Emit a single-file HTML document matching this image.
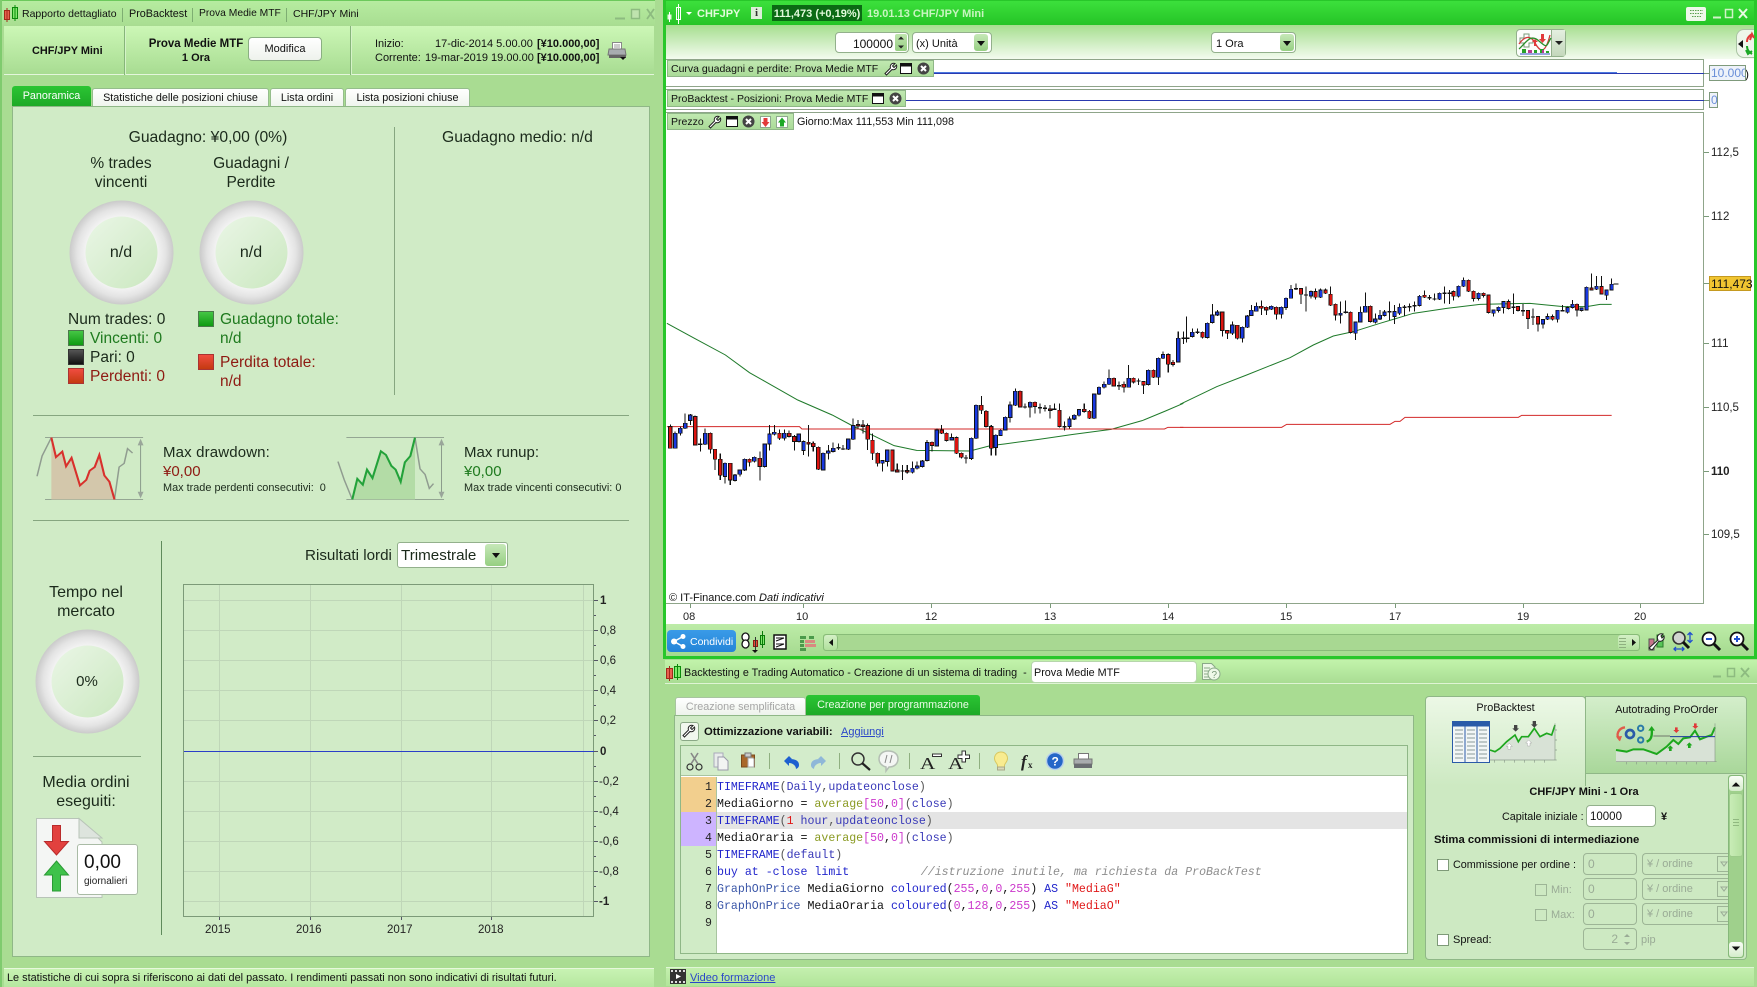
<!DOCTYPE html>
<html lang="it"><head><meta charset="utf-8"><title>ProBacktest</title>
<style>
html,body{margin:0;padding:0}
body{width:1757px;height:987px;overflow:hidden;position:relative;background:#a9dc92;font-family:"Liberation Sans",sans-serif;font-size:11px;color:#111}
.a{position:absolute;box-sizing:border-box}
.t{position:absolute;white-space:nowrap;line-height:16px;height:16px;margin-top:1px}
.c{text-align:center}
.b{font-weight:bold}
.f15{font-size:15.5px;color:#1b2a1b}
.sq{position:absolute;width:16px;height:16px;box-sizing:border-box;border:1px solid #4a7a4a}
.grn{background:linear-gradient(#45c645,#0f9a12)}
.blk{background:linear-gradient(#555,#111);border-color:#333}
.red{background:linear-gradient(#f04c40,#c43a10);border-color:#a33}
.tab{position:absolute;top:88px;height:19px;background:linear-gradient(#fff,#eef4ec);border:1px solid #95bd8c;border-bottom:0;border-radius:3px 3px 0 0;text-align:center;line-height:19px;font-size:10.8px;box-sizing:border-box}
.inp{position:absolute;box-sizing:border-box;background:#fff;border:1px solid #93b08c;border-radius:4px}
.dis{position:absolute;box-sizing:border-box;border:1px solid #9db596;border-radius:4px;height:22px;color:#9aab96;line-height:21px;padding-left:4px;font-size:12px}
.arrbtn{position:absolute;box-sizing:border-box;background:linear-gradient(#c6e8b8,#96cf82);border-radius:3px}
.arrbtn:after{content:"";position:absolute;left:50%;top:50%;margin:-2px 0 0 -4px;border:4px solid transparent;border-top:5px solid #111;border-bottom:0}
.tag{position:absolute;left:667px;background:linear-gradient(#c0e8b0,#aadb98);border:1px solid #8fb787;box-sizing:border-box;height:17px;line-height:16px;padding-left:3px;font-size:10.5px;white-space:nowrap}
.pane{position:absolute;left:666px;width:1038px;background:#fff;border:1px solid #8fa58a;border-left:0;box-sizing:border-box}
.code{position:absolute;left:717px;white-space:pre;font-family:"Liberation Mono",monospace;font-size:11.6px;line-height:17px;height:17px;color:#111;margin-top:2px}
.n{position:absolute;left:680px;width:32px;text-align:right;font-family:"Liberation Mono",monospace;font-size:11.6px;line-height:17px;height:17px;color:#222;margin-top:2px}
.k{color:#2226cc}.v{color:#3838b8}.o{color:#8a9a22}.m{color:#cc38cc}.p{color:#555}.s{color:#e01818}.h{color:#3a56a8}.cm{color:#8d8d8d;font-style:italic;margin-left:2px}
svg{position:absolute;overflow:visible}
.ax{font-size:12px;color:#111}
.yl{position:absolute;left:600px;font-size:11.5px;line-height:14px;height:14px;color:#222;white-space:nowrap;margin-top:1px}
.lb{position:absolute;font-size:11.5px;color:#222;white-space:nowrap;line-height:14px;margin-top:1px}
</style></head><body>

<!-- LEFT WINDOW -->
<div class="a" style="left:0;top:0;width:655px;height:25px;background:linear-gradient(#b6eca0,#a9de92);border-top:1px solid #6cc95c"></div>
<div class="a" style="left:0;top:0;width:2px;height:987px;background:#7fcb6e"></div>
<svg style="left:0;top:0" width="22" height="26"><path d="M4.500 10.500h5v9h-5z" fill="#e8604e" stroke="#a02a1a"/><path d="M7 8v14" stroke="#a02a1a"/><path d="M12.500 7.500h5v11h-5z" fill="#7ee86a" stroke="#0a8a0a"/><path d="M15 5v16" stroke="#0a8a0a"/></svg>
<div class="t" style="left:22px;top:5px;font-size:10.5px">Rapporto dettagliato</div>
<div class="a" style="left:122px;top:8px;width:1px;height:14px;background:#7eae72"></div>
<div class="t" style="left:129px;top:5px;font-size:10.8px">ProBacktest</div>
<div class="a" style="left:192px;top:8px;width:1px;height:14px;background:#7eae72"></div>
<div class="t" style="left:199px;top:5px;font-size:10.3px">Prova Medie MTF</div>
<div class="a" style="left:286px;top:8px;width:1px;height:14px;background:#7eae72"></div>
<div class="t" style="left:293px;top:5px;font-size:10.5px">CHF/JPY Mini</div>
<svg style="left:612px;top:6px" width="42" height="16"><path d="M3 12.500h10" stroke="#8dbb80" stroke-width="2"/><path d="M19.500 3.500h8v9h-8z" fill="#bfe3ae" stroke="#8dbb80" stroke-width="1.400"/><path d="M35 3l7 10M42 3l-7 10" stroke="#8dbb80" stroke-width="1.800"/></svg>

<div class="a" style="left:4px;top:26px;width:650px;height:49px;background:linear-gradient(#ccf7b6,#a8dc92);border-bottom:1px solid #e4f6dc"></div>
<div class="a" style="left:124px;top:26px;width:1px;height:49px;background:#86b57a;box-shadow:1px 0 #d5f3c8"></div>
<div class="a" style="left:350px;top:26px;width:1px;height:49px;background:#86b57a;box-shadow:1px 0 #d5f3c8"></div>
<div class="t b" style="left:32px;top:42px;font-size:10.9px">CHF/JPY Mini</div>
<div class="t b c" style="left:139px;width:114px;top:35px;font-size:11.500px">Prova Medie MTF</div>
<div class="t b c" style="left:139px;width:114px;top:49px;font-size:11px">1 Ora</div>
<div class="a c" style="left:248px;top:37px;width:74px;height:24px;background:linear-gradient(#fff,#eef2ec);border:1px solid #8aaf82;border-radius:4px;line-height:22px;font-size:11px">Modifica</div>
<div class="t" style="left:375px;top:35px;font-size:11px">Inizio:</div>
<div class="t" style="left:375px;top:49px;font-size:11px">Corrente:</div>
<div class="t" style="left:435px;width:97px;text-align:right;top:35px;font-size:11px">17-dic-2014 5.00.00</div>
<div class="t" style="left:425px;width:107px;text-align:right;top:49px;font-size:11px">19-mar-2019 19.00.00</div>
<div class="t b" style="left:537px;top:35px;font-size:11px">[¥10.000,00]</div>
<div class="t b" style="left:537px;top:49px;font-size:11px">[¥10.000,00]</div>
<svg style="left:607px;top:41px" width="22" height="20"><path d="M5.500 1.500h9v7h-9z" fill="#fff" stroke="#888"/><path d="M7 4h6M7 6h6" stroke="#999"/><path d="M2 8h16l1 6H1z" fill="#a8adb0" stroke="#777"/><path d="M2 14h17v3H2z" fill="#666"/><path d="M13 16h6l-3 3z" fill="#111"/></svg>

<!-- tabs -->
<div class="a c" style="left:12px;top:86px;width:79px;height:21px;background:linear-gradient(#2bc533,#1ca826);border-radius:3px 3px 0 0;color:#fff;line-height:21px;font-size:10.8px">Panoramica</div>
<div class="tab" style="left:92px;width:177px">Statistiche delle posizioni chiuse</div>
<div class="tab" style="left:270px;width:74px">Lista ordini</div>
<div class="tab" style="left:345px;width:125px">Lista posizioni chiuse</div>
<div class="a" style="left:12px;top:106px;width:638px;height:851px;background:#d0ebc6;border:1px solid #8fb787"></div>

<div class="t f15 c" style="left:88px;width:240px;top:129px;font-size:15.7px">Guadagno: ¥0,00 (0%)</div>
<div class="a" style="left:394px;top:127px;width:1px;height:268px;background:#86a680"></div>
<div class="t f15" style="left:442px;top:129px;font-size:15.7px">Guadagno medio: n/d</div>
<div class="t f15 c" style="left:61px;width:120px;top:155px">% trades</div>
<div class="t f15 c" style="left:61px;width:120px;top:174px">vincenti</div>
<div class="t f15 c" style="left:191px;width:120px;top:155px">Guadagni /</div>
<div class="t f15 c" style="left:191px;width:120px;top:174px">Perdite</div>

<svg width="0" height="0" style="left:0;top:0"><defs>
<radialGradient id="ring"><stop offset=".68" stop-color="#f4f4f4"/><stop offset=".85" stop-color="#e4e4e4"/><stop offset="1" stop-color="#cacaca"/></radialGradient>
<linearGradient id="inn" x1="0" y1="0" x2="1" y2="1"><stop offset="0" stop-color="#eaf6e6"/><stop offset="1" stop-color="#cbe8c0"/></linearGradient>
</defs></svg>
<svg style="left:69px;top:200px" width="105" height="105"><circle cx="52.500" cy="52.500" r="52" fill="url(#ring)"/><circle cx="52.500" cy="52.500" r="36" fill="url(#inn)"/></svg>
<svg style="left:199px;top:200px" width="105" height="105"><circle cx="52.500" cy="52.500" r="52" fill="url(#ring)"/><circle cx="52.500" cy="52.500" r="36" fill="url(#inn)"/></svg>
<svg style="left:35px;top:629px" width="105" height="105"><circle cx="52.500" cy="52.500" r="52" fill="url(#ring)"/><circle cx="52.500" cy="52.500" r="36" fill="url(#inn)"/></svg>
<div class="t f15 c" style="left:81px;width:80px;top:244px;font-size:16px">n/d</div>
<div class="t f15 c" style="left:211px;width:80px;top:244px;font-size:16px">n/d</div>
<div class="t f15 c" style="left:47px;width:80px;top:673px;font-size:15px">0%</div>

<div class="t f15" style="left:68px;top:311px">Num trades: 0</div>
<div class="sq grn" style="left:68px;top:330px"></div><div class="t f15" style="left:90px;top:330px;color:#1e7a1e">Vincenti: 0</div>
<div class="sq blk" style="left:68px;top:349px"></div><div class="t f15" style="left:90px;top:349px">Pari: 0</div>
<div class="sq red" style="left:68px;top:368px"></div><div class="t f15" style="left:90px;top:368px;color:#8e1a12">Perdenti: 0</div>
<div class="sq grn" style="left:198px;top:311px"></div><div class="t f15" style="left:220px;top:311px;color:#1e7a1e">Guadagno totale:</div>
<div class="t f15" style="left:220px;top:330px;color:#1e7a1e">n/d</div>
<div class="sq red" style="left:198px;top:354px"></div><div class="t f15" style="left:220px;top:354px;color:#8e1a12">Perdita totale:</div>
<div class="t f15" style="left:220px;top:373px;color:#8e1a12">n/d</div>

<div class="a" style="left:33px;top:415px;width:596px;height:1px;background:#86a680"></div>
<div class="a" style="left:33px;top:520px;width:596px;height:1px;background:#86a680"></div>

<svg style="left:0;top:410px" width="660" height="110"><g transform="scale(.42088 .36805)" fill="none">
<path d="M107 75H340M107 243H340M823 75H1055M823 243H1055" stroke="#8c9c8c" stroke-width="2.400"/>
<path d="M122 75L133 128 148 113 157 153 170 130 190 205 205 190 213 165 225 155 236 122 248 178 260 195 272 243H122z" fill="#d3c7ab"/>
<path d="M837 243L849 187 862 203 872 162 885 185 905 112 917 122 930 152 940 162 952 195 962 142 975 125 986 75V243z" fill="#b3dca6"/>
<path d="M88 180L100 125 122 75M272 243L283 155 295 145 303 105 315 117M803 140L818 190 837 243M986 75L998 160 1010 175 1020 213 1030 200" stroke="#909c90" stroke-width="3.600"/>
<path d="M122 75L133 128 148 113 157 153 170 130 190 205 205 190 213 165 225 155 236 122 248 178 260 195 272 243" stroke="#d8302c" stroke-width="5"/>
<path d="M837 243L849 187 862 203 872 162 885 185 905 112 917 122 930 152 940 162 952 195 962 142 975 125 986 75" stroke="#23a23a" stroke-width="5"/>
<path d="M334 95V225M1049 95V225" stroke="#8c9c8c" stroke-width="2.400"/>
<path d="M334 78l-7 18h14zM334 240l-7-18h14zM1049 78l-7 18h14zM1049 240l-7-18h14z" fill="#9aa69a"/>
</g></svg>
<div class="t" style="left:163px;top:444px;font-size:15px;letter-spacing:.15px;color:#1b2a1b">Max drawdown:</div>
<div class="t" style="left:163px;top:463px;font-size:15px;color:#8e1a12">¥0,00</div>
<div class="t" style="left:163px;top:479px;font-size:10.9px;color:#1b2a1b">Max trade perdenti consecutivi:&nbsp; 0</div>
<div class="t" style="left:464px;top:444px;font-size:15px;color:#1b2a1b">Max runup:</div>
<div class="t" style="left:464px;top:463px;font-size:15px;color:#1e7a1e">¥0,00</div>
<div class="t" style="left:464px;top:479px;font-size:10.9px;color:#1b2a1b">Max trade vincenti consecutivi: 0</div>

<div class="a" style="left:161px;top:541px;width:1px;height:394px;background:#5f8a5c"></div>
<div class="t f15 c" style="left:26px;width:120px;top:584px;font-size:16px">Tempo nel</div>
<div class="t f15 c" style="left:26px;width:120px;top:603px;font-size:16px">mercato</div>
<div class="a" style="left:33px;top:756px;width:108px;height:1px;background:#86a680"></div>
<div class="t f15 c" style="left:26px;width:120px;top:774px;font-size:16px">Media ordini</div>
<div class="t f15 c" style="left:26px;width:120px;top:793px;font-size:16px">eseguiti:</div>
<svg style="left:36px;top:818px" width="70" height="82"><path d="M.5.5H43L66 24V79.500H.5z" fill="#f4f6f4" stroke="#b8c4b8"/><path d="M43 .5V20H66z" fill="#dde4dd" stroke="#b8c4b8"/><path d="M16.500 7.500h8v16h8L20.500 37 8.500 23.500h8z" fill="#e2413e" stroke="#b92b2b"/><path d="M20.500 43L32.500 57h-8v16h-8V57h-8z" fill="#3fc24a" stroke="#2a9a34"/></svg>
<div class="a" style="left:77px;top:844px;width:61px;height:51px;background:#fff;border:1px solid #a9bba5;border-radius:3px"></div>
<div class="t" style="left:84px;top:854px;font-size:19px;color:#111">0,00</div>
<div class="t" style="left:84px;top:873px;font-size:10px;color:#222">giornalieri</div>

<div class="t f15" style="left:305px;top:547px;font-size:15.2px">Risultati lordi</div>
<div class="inp" style="left:397px;top:542px;width:111px;height:26px;border-radius:3px"></div>
<div class="t" style="left:401px;top:547px;font-size:15.2px;color:#1b2a1b">Trimestrale</div>
<div class="arrbtn" style="left:485px;top:544px;width:21px;height:22px"></div>

<div class="a" style="left:183px;top:584px;width:411px;height:333px;background:#d1ebc7;border:1px solid #7c9a78"></div>
<svg style="left:0;top:0" width="660" height="987" shape-rendering="crispEdges">
<path d="M184 600.500H593M184 630.500H593M184 660.500H593M184 690.500H593M184 720.500H593M184 781.500H593M184 811.500H593M184 841.500H593M184 871.500H593M184 901.500H593M219.500 585V916M310.500 585V916M401.500 585V916M491.500 585V916M583.500 585V916" stroke="#bfd6b8"/>
<path d="M184 751.500H594" stroke="#2a3ec8"/>
<path d="M594 600.500h4M594 630.500h4M594 660.500h4M594 690.500h4M594 720.500h4M594 751.500h4M594 781.500h4M594 811.500h4M594 841.500h4M594 871.500h4M594 901.500h4M594 615.500h2M594 645.500h2M594 675.500h2M594 705.500h2M594 735.500h2M594 766.500h2M594 796.500h2M594 826.500h2M594 856.500h2M594 886.500h2M219.500 917v3M310.500 917v3M401.500 917v3M491.500 917v3" stroke="#556"/>
</svg>
<div class="yl b" style="top:593px">1</div><div class="yl" style="top:623px">0,8</div><div class="yl" style="top:653px">0,6</div><div class="yl" style="top:683px">0,4</div><div class="yl" style="top:713px">0,2</div><div class="yl b" style="top:744px">0</div><div class="yl" style="left:599px;top:774px">-0,2</div><div class="yl" style="left:599px;top:804px">-0,4</div><div class="yl" style="left:599px;top:834px">-0,6</div><div class="yl" style="left:599px;top:864px">-0,8</div><div class="yl b" style="left:599px;top:894px">-1</div>
<div class="lb" style="left:205px;top:922px">2015</div><div class="lb" style="left:296px;top:922px">2016</div><div class="lb" style="left:387px;top:922px">2017</div><div class="lb" style="left:478px;top:922px">2018</div>

<div class="a" style="left:4px;top:968px;width:650px;height:19px;background:linear-gradient(#c8f3b3,#b5e79f);border-top:1px solid #e6f8dc"></div>
<div class="t" style="left:7px;top:969px;font-size:10.9px">Le statistiche di cui sopra si riferiscono ai dati del passato. I rendimenti passati non sono indicativi di risultati futuri.</div>

<!-- RIGHT TOP WINDOW -->
<div class="a" style="left:663px;top:0;width:1094px;height:660px;background:#28c72a"></div>
<div class="a" style="left:666px;top:1px;width:1088px;height:24px;background:linear-gradient(#3ce03c,#25c426)"></div>
<svg style="left:664px;top:0" width="30" height="26"><path d="M3.500 14.500h4v5h-4z" fill="#e8f8e0"/><path d="M5.500 12v10" stroke="#fff"/><path d="M12.500 7.500h4v12h-4z" fill="none" stroke="#fff"/><path d="M14.500 4v20" stroke="#fff"/><path d="M22 12h6l-3 3z" fill="#fff"/></svg>
<div class="t b" style="left:697px;top:5px;font-size:11px;color:#e3fbdc">CHFJPY</div>
<div class="a b c" style="left:751px;top:7px;width:11px;height:12px;background:#dcefd8;color:#333;font-family:'Liberation Serif',serif;font-size:11px;line-height:12px">i</div>
<div class="a" style="left:772px;top:5px;width:90px;height:16px;background:#0b6a14"></div>
<div class="t b c" style="left:772px;width:90px;top:5px;font-size:11px;color:#e3fbdc">111,473 (+0,19%)</div>
<div class="t b" style="left:867px;top:5px;font-size:11px;color:#c8f5c0">19.01.13 CHF/JPY Mini</div>
<div class="a" style="left:1686px;top:7px;width:20px;height:14px;background:#eef8ea;border-radius:2px"></div>
<svg style="left:1689px;top:9px" width="15" height="11"><path d="M1 1.500h13M1 4.500h13M3 7.500h9" stroke="#59a04f" stroke-dasharray="1.500 1"/></svg>
<svg style="left:1710px;top:6px" width="44" height="16"><path d="M3 11.500h8" stroke="#d0f3c8" stroke-width="2"/><path d="M15.500 3.500h7v8h-7z" fill="none" stroke="#d0f3c8" stroke-width="1.500"/><path d="M29 3l8 9M37 3l-8 9" stroke="#e8fae2" stroke-width="2"/></svg>

<div class="a" style="left:666px;top:25px;width:1088px;height:34px;background:linear-gradient(#a6de8f,#f3fbef)"></div>
<div class="inp" style="left:835px;top:32px;width:74px;height:21px"></div>
<div class="t" style="left:835px;width:58px;text-align:right;top:35px;font-size:12px">100000</div>
<div class="a" style="left:895px;top:34px;width:12px;height:17px;background:linear-gradient(#bfe5ae,#97cf83);border-radius:2px"></div>
<svg style="left:895px;top:34px" width="12" height="17"><path d="M6 2.500l3 3H3zM6 14.500l3-3H3z" fill="#222"/></svg>
<div class="inp" style="left:912px;top:32px;width:80px;height:21px"></div>
<div class="t" style="left:916px;top:35px;font-size:11px">(x) Unità</div>
<div class="arrbtn" style="left:974px;top:34px;width:14px;height:17px"></div>
<div class="inp" style="left:1211px;top:32px;width:85px;height:21px"></div>
<div class="t" style="left:1216px;top:35px;font-size:11px">1 Ora</div>
<div class="arrbtn" style="left:1280px;top:34px;width:14px;height:17px"></div>
<div class="inp" style="left:1516px;top:29px;width:50px;height:28px;background:#fbfdfa"></div>
<div class="a" style="left:1551px;top:30px;width:14px;height:26px;background:linear-gradient(#e4efe0,#c4d8bc);border-left:1px solid #93b08c"></div>
<svg style="left:1516px;top:29px" width="50" height="28"><path d="M4 9h4V5h5v4h4v5h-4v4H8v-4H4z" fill="#fff" stroke="#7a9a7a"/><path d="M3 15C8 8 14 5 19 14S29 26 34 6" fill="none" stroke="#d23a3a" stroke-width="1.300"/><path d="M3 20C10 14 14 4 23 12S30 17 35 9" fill="none" stroke="#2a8f2a" stroke-width="1.300"/><path d="M6 20h4v4H6zM18 21h3v3h-3zM24 20h4v4h-4zM30 22h3v2h-3z" fill="#25a228"/><path d="M12 21h4v3h-4zM26 21h2v3h-2z" fill="#b83a90"/><path d="M4 25h30" stroke="#2c4fc0"/><path d="M16 13l3-3 3 3h-2v4h-2v-4zM25 5h3v5h2l-3.500 4L23 10h2z" fill="#e23a3a"/><path d="M39 12h8l-4 4z" fill="#222"/></svg>
<div class="a" style="left:1736px;top:29px;width:18px;height:29px;background:#eef6ea;border:1px solid #aac4a4;border-right:0;border-radius:8px 0 0 8px"></div>
<svg style="left:1736px;top:29px" width="18" height="29"><path d="M2 15l5-4v8z" fill="#111"/><path d="M11 13c0-4 2-6 5-8M14 11l2-6 2 4" fill="none" stroke="#e23a3a" stroke-width="2"/><path d="M11 17c0 4 2 6 5 8M10 21l2 4 4-3" fill="none" stroke="#1ca826" stroke-width="2"/></svg>

<div class="a" style="left:666px;top:59px;width:1088px;height:565px;background:#fff"></div>

<div class="pane" style="top:59px;height:28px"></div>
<div class="pane" style="top:89px;height:21px"></div>
<div class="pane" style="top:112px;height:492px"></div>
<svg style="left:0;top:0" width="1757" height="660" shape-rendering="crispEdges">
<path d="M933 73.500H1704" stroke="#2a3ab0"/>
<path d="M933 72.500H1617" stroke="#4a78e0"/>
<path d="M905 100.500H1704" stroke="#2a3ab0"/>
<path d="M1704 73.500h5M1704 100.500h5" stroke="#7a9a7a"/>
<path d="M1704 152.500h5M1704 216.500h5M1704 283.500h5M1704 343.500h5M1704 407.500h5M1704 471.500h5M1704 534.500h5M690.500 604v4M803.500 604v4M931.500 604v4M1050.500 604v4M1168.500 604v4M1286.500 604v4M1395.500 604v4M1523.500 604v4M1640.500 604v4" stroke="#7a9a7a"/>
</svg>
<div class="tag" style="top:60px;width:267px">Curva guadagni e perdite: Prova Medie MTF</div>
<div class="tag" style="top:90px;width:239px">ProBacktest - Posizioni: Prova Medie MTF</div>
<div class="tag" style="top:113px;width:127px">Prezzo</div>
<svg width="0" height="0" style="left:0;top:0"><defs>
<g id="wr"><path d="M1 11.500L6.500 6C5.500 3 8 .5 11 1.500L8.500 4l1.500 1.500L12.500 3c1 3-1.500 5.500-4.500 4.500L2.500 13z" fill="#fff" stroke="#222" stroke-width="1"/></g>
<g id="wn"><path d="M.5 1.500h11v10H.5z" fill="#fff" stroke="#111"/><path d="M.5 1.500h11v3H.5z" fill="#111"/></g>
<g id="xx"><circle cx="6.500" cy="6.500" r="6" fill="#444"/><path d="M4 4l5 5M9 4l-5 5" stroke="#fff" stroke-width="2"/></g>
</defs></svg>
<svg style="left:884px;top:62px" width="50" height="14"><use href="#wr" x="0" y="0"/><use href="#wn" x="16" y="0"/><use href="#xx" x="33" y="0"/></svg>
<svg style="left:872px;top:92px" width="30" height="14"><use href="#wn" x="0" y="0"/><use href="#xx" x="17" y="0"/></svg>
<svg style="left:708px;top:115px" width="88" height="14"><use href="#wr" x="0" y="0"/><use href="#wn" x="18" y="0"/><use href="#xx" x="34" y="0"/><path d="M52.500 1.500h10v11h-10z" fill="#fff" stroke="#8ea88e"/><path d="M55.500 3h4v4h2l-4 5-4-5h2z" fill="#e23a3a"/><path d="M68.500 1.500h11v11h-11z" fill="#fff" stroke="#8ea88e"/><path d="M74 2.500l4 5h-2v4h-4v-4h-2z" fill="#1ca826"/></svg>
<div class="t" style="left:797px;top:113px;font-size:10.8px">Giorno:Max 111,553 Min 111,098</div>

<!-- axis tags -->
<div class="t" style="left:1745px;top:65px;font-size:12px">)</div>
<div class="a" style="left:1709px;top:65px;width:37px;height:16px;border:1px solid #7f9a7c;background:#eef2fa;color:#6b8fd8;font-size:12px;line-height:14px;padding-left:1px;overflow:hidden;white-space:nowrap">10.000</div>
<div class="a" style="left:1709px;top:92px;width:9px;height:16px;border:1px solid #7f9a7c;background:#eef2fa;color:#6b8fd8;font-size:12px;line-height:14px;padding-left:1px">0</div>
<div class="lb ax" style="left:1711px;top:145px">112,5</div>
<div class="lb ax" style="left:1711px;top:209px">112</div>
<div class="a" style="left:1709px;top:276px;width:42px;height:15px;background:#f1c531;border:1px solid #c59a20;font-size:12px;line-height:14px;padding-left:1px;white-space:nowrap;color:#111">111,473</div>
<div class="lb ax" style="left:1711px;top:336px">111</div>
<div class="lb ax" style="left:1711px;top:400px">110,5</div>
<div class="lb ax b" style="left:1711px;top:464px">110</div>
<div class="lb ax" style="left:1711px;top:527px">109,5</div>

<!-- chart -->
<svg style="left:0;top:0" width="1757" height="660" fill="none">
<g transform="translate(660 270) scale(.34435 .33333)">
<path d="M20 160L100 205 190 255 260 308 400 390 500 435 560 468 620 497 680 527 745 541 900 543 960 527 1000 522 1100 508 1200 493 1310 478 1400 452 1468 423 1520 400" stroke="#1f7a2a" stroke-width="3"/>
<path d="M20 470H405L412 477H1465L1475 472H1520" stroke="#d32a2a" stroke-width="3"/>
<g shape-rendering="crispEdges">
<path stroke="#111" stroke-width="3" d="M30 463V535M44 485V536M59 470V497M73 430V477M88 432V465M102 437V527M117 505V545M131 475V525M146 488V550M160 538V600M175 550V630M189 578V640M204 580V645M218 612V635M232 598V620M246 565V603M260 565V590M274 560V578M290 545V632M304 520V592M318 465V542M332 465V497M347 478V510M361 478V512M375 482V503M390 495V542M403 490V518M417 512V555M431 465V560M445 515V545M460 530V600M474 548V602M489 525V568M503 518V547M518 520V540M532 525V540M547 505V540M561 445V510M575 450V475M589 450V490M603 460V540M617 490V570M632 548V590M646 570V605M660 538V590M675 538V605M689 580V608M704 585V630M718 585V610M733 575V610M747 575V598M762 570V592M776 510V575M790 515V545M804 475V530M818 465V492M832 488V515M847 490V512M861 500V552M875 548V565M889 555V580M904 503V570M918 404V507M933 378V432M947 420V472M962 465V557M975 494V557M989 478V498M1003 440V482M1017 395V458M1032 355V408M1046 362V412M1060 400V415M1075 395V443M1089 395V430M1104 400V430M1118 405V425M1133 405V445M1146 400V420M1160 400V472M1175 455V482M1189 440V475M1203 433V450M1217 417V440M1232 400V428M1247 420V447M1261 370V447M1275 350V375M1290 335V355M1304 298V345M1318 323V350M1333 335V360M1347 335V368M1361 285V352M1375 322V340M1390 325V345M1404 333V372M1418 299V346M1433 299V324M1447 263V345M1461 245V267M1476 250V308M1490 270V290M1505 185V278M1520 185V222"/>
<path stroke="#111" stroke-width="4" d="M111 523h12M512 533h12M526 537h12M683 604h12M698 603h12M883 564h12M1054 411h12M1098 413h12M1112 415h12M1140 418h12M1169 470h12M1327 347h12M1384 333h12M1514 205h12"/>
<path fill="#1838e0" stroke="#111" stroke-width="2.500" d="M39 490h10V535h-10zM54 475h10V490h-10zM68 460h10V475h-10zM83 435h10V452h-10zM126 490h10V523h-10zM184 580h10V620h-10zM213 615h10V632h-10zM227 600h10V613h-10zM241 568h10V600h-10zM269 562h10V574h-10zM299 522h10V590h-10zM313 492h10V522h-10zM327 487h10V493h-10zM356 490h10V505h-10zM398 492h10V515h-10zM412 515h10V542h-10zM469 550h10V600h-10zM484 543h10V550h-10zM498 535h10V545h-10zM542 507h10V538h-10zM556 467h10V508h-10zM641 572h10V580h-10zM655 540h10V575h-10zM728 595h10V607h-10zM742 588h10V595h-10zM757 573h10V590h-10zM771 518h10V572h-10zM799 480h10V528h-10zM842 503h10V510h-10zM899 505h10V566h-10zM913 406h10V505h-10zM970 496h10V533h-10zM984 481h10V497h-10zM998 442h10V480h-10zM1012 405h10V443h-10zM1027 364h10V406h-10zM1070 397h10V411h-10zM1184 447h10V470h-10zM1198 436h10V447h-10zM1212 419h10V436h-10zM1256 372h10V445h-10zM1270 352h10V372h-10zM1285 343h10V352h-10zM1299 325h10V343h-10zM1356 325h10V352h-10zM1413 301h10V344h-10zM1442 265h10V322h-10zM1456 254h10V265h-10zM1500 205h10V276h-10z"/>
<path fill="#dc1410" stroke="#111" stroke-width="2.500" d="M25 470h10V535h-10zM97 440h10V525h-10zM141 490h10V538h-10zM155 538h10V568h-10zM170 568h10V616h-10zM199 580h10V630h-10zM255 568h10V577h-10zM285 565h10V590h-10zM342 490h10V505h-10zM370 490h10V500h-10zM385 500h10V515h-10zM426 517h10V522h-10zM440 520h10V530h-10zM455 532h10V598h-10zM570 464h10V468h-10zM584 465h10V470h-10zM598 467h10V508h-10zM612 511h10V550h-10zM627 550h10V580h-10zM670 540h10V603h-10zM684 600h10V606h-10zM713 602h10V606h-10zM785 517h10V527h-10zM813 480h10V490h-10zM827 490h10V512h-10zM856 503h10V550h-10zM870 550h10V562h-10zM928 406h10V421h-10zM942 424h10V470h-10zM957 470h10V535h-10zM1041 364h10V411h-10zM1084 397h10V410h-10zM1128 417h10V422h-10zM1155 421h10V470h-10zM1227 418h10V425h-10zM1242 424h10V445h-10zM1313 325h10V348h-10zM1342 343h10V352h-10zM1370 325h10V336h-10zM1399 335h10V345h-10zM1428 301h10V322h-10zM1471 254h10V283h-10zM1485 277h10V284h-10z"/>
</g></g>
<g transform="translate(1180 260) scale(.33333)">
<path d="M0 433L110 380 200 345 330 293 400 255 460 228 520 215 600 190 700 160 800 145 900 133 1050 130 1150 140 1220 140 1260 133 1295 133" stroke="#1f7a2a" stroke-width="3"/>
<path d="M0 502H305L320 493H630L645 484H660L675 472H1015L1025 466H1295" stroke="#d32a2a" stroke-width="3"/>
<g shape-rendering="crispEdges">
<path stroke="#111" stroke-width="3" d="M20 170V248M37 205V232M52 205V222M68 215V235M82 188V235M97 132V190M112 150V168M127 155V230M142 210V237M157 185V225M172 195V238M187 200V248M202 165V204M214 135V168M229 128V155M244 122V165M259 140V165M274 137V150M289 140V178M304 140V175M318 113V150M333 75V116M348 70V90M363 85V132M378 80V155M393 92V115M407 85V118M422 85V114M437 85V102M452 80V138M467 130V182M482 125V190M497 122V160M512 155V220M527 185V240M541 140V188M556 98V158M571 137V187M586 160V190M600 150V180M614 150V170M629 125V180M644 135V192M659 130V165M674 135V168M689 130V155M704 125V155M719 105V139M734 92V114M749 105V120M764 100V122M779 98V120M794 80V130M808 90V132M821 92V122M836 77V112M851 52V81M866 58V96M881 92V125M896 98V122M911 98V112M926 103V160M941 148V170M956 140V158M971 123V160M986 118V148M1000 100V162M1014 138V155M1029 132V168M1044 150V207M1059 145V195M1074 168V215M1089 177V205M1103 160V180M1118 163V182M1133 150V187M1148 135V155M1163 140V160M1178 120V145M1191 130V170M1205 142V155M1220 80V152M1235 40V92M1250 48V90M1265 48V104M1280 88V120M1295 55V92"/>
<path stroke="#111" stroke-width="4" d="M12 235h16M46 217h12M342 86h12M372 105h12M490 157h14M623 155h12M668 142h12M683 140h12M698 137h12M743 113h12M758 117h12M788 100h12M802 100h12M994 142h12M1023 152h12M1053 171h12M1142 152h12M1300 72h16"/>
<path fill="#1838e0" stroke="#111" stroke-width="2.500" d="M32 217h10V230H32zM77 190h10V233H77zM92 165h10V188H92zM107 156h10V165H107zM152 195h10V220H152zM182 202h10V235H182zM197 168h10V202H197zM209 151h10V167H209zM224 139h10V154H224zM269 139h10V148H269zM299 142h10V163H299zM313 115h10V143H313zM328 88h10V115H328zM388 95h10V108H388zM417 90h10V112H417zM477 160h10V165H477zM522 186h10V220H522zM536 157h10V186H536zM551 139h10V157H551zM581 177h10V187H581zM595 166h10V177H595zM609 156h10V167H609zM639 155h10V170H639zM654 142h10V160H654zM714 109h10V137H714zM774 100h10V118H774zM831 79h10V109H831zM846 61h10V79H846zM891 100h10V116H891zM936 150h10V160H936zM951 142h10V152H951zM966 125h10V143H966zM1084 179h10V192H1084zM1098 170h10V178H1098zM1128 151h10V178H1128zM1158 143h10V157H1158zM1173 133h10V143H1173zM1200 144h10V152H1200zM1215 82h10V150H1215zM1245 79h10V88H1245zM1275 90h10V106H1275zM1290 73h10V90H1290z"/>
<path fill="#dc1410" stroke="#111" stroke-width="2.500" d="M63 217h10V232H63zM122 156h10V212H122zM137 212h10V220H137zM167 196h10V235H167zM239 139h10V145H239zM254 142h10V150H254zM284 142h10V163H284zM358 86h10V103H358zM402 95h10V112H402zM432 90h10V100H432zM447 103h10V136H447zM462 133h10V165H462zM507 157h10V218H507zM566 139h10V185H566zM729 106h10V112H729zM816 95h10V109H816zM861 61h10V94H861zM876 94h10V116H876zM906 100h10V107H906zM921 105h10V158H921zM981 125h10V146H981zM1009 140h10V152H1009zM1039 152h10V176H1039zM1069 170h10V192H1069zM1113 170h10V178H1113zM1186 133h10V150H1186zM1230 84h10V90H1230zM1260 80h10V102H1260z"/>
</g></g>
</svg>

<div class="t" style="left:669px;top:589px;font-size:11px">© IT-Finance.com&nbsp;<i>Dati indicativi</i></div>
<div class="lb" style="left:683px;top:609px;font-size:11px">08</div><div class="lb" style="left:796px;top:609px;font-size:11px">10</div><div class="lb" style="left:925px;top:609px;font-size:11px">12</div><div class="lb" style="left:1044px;top:609px;font-size:11px">13</div><div class="lb" style="left:1162px;top:609px;font-size:11px">14</div><div class="lb" style="left:1280px;top:609px;font-size:11px">15</div><div class="lb" style="left:1389px;top:609px;font-size:11px">17</div><div class="lb" style="left:1517px;top:609px;font-size:11px">19</div><div class="lb" style="left:1634px;top:609px;font-size:11px">20</div>

<!-- bottom toolbar -->
<div class="a" style="left:666px;top:624px;width:1088px;height:32px;background:linear-gradient(#bdeca8,#a5da8f)"></div>
<div class="a" style="left:667px;top:630px;width:69px;height:22px;background:linear-gradient(#3a9be8,#2484d8);border-radius:4px"></div>
<svg style="left:670px;top:633px" width="18" height="17"><path d="M4 8.500L13 3.500M4 8.500L13 13.500" stroke="#fff" stroke-width="1.500"/><circle cx="4" cy="8.500" r="3" fill="#fff"/><circle cx="13" cy="3.500" r="2.500" fill="#fff"/><circle cx="13" cy="13.500" r="2.500" fill="#fff"/></svg>
<div class="t" style="left:690px;top:633px;font-size:10.5px;color:#fff">Condividi</div>
<svg style="left:740px;top:630px" width="90" height="24"><ellipse cx="5.500" cy="7" rx="3.500" ry="4" fill="#fff" stroke="#111" stroke-width="1.300"/><ellipse cx="5.500" cy="14" rx="3.500" ry="4" fill="#fff" stroke="#111" stroke-width="1.300"/><path d="M13.500 10.500h4v6h-4z" fill="#e2513a" stroke="#8e1a12"/><path d="M15.500 7v13" stroke="#333"/><path d="M20.500 5.500h4v9h-4z" fill="#7ee86a" stroke="#0a7a0a"/><path d="M22.500 1v17" stroke="#0a7a0a"/><path d="M12 20h6l-3 3z" fill="#111"/><path d="M34 5h12v14H34z" fill="#fff" stroke="#111" stroke-width="1.500"/><path d="M36 8h8M36 11l8-3M36 14h8M36 17l8-3" stroke="#111"/><path d="M60 6h6v3h-6zM60 10h4v3h-4zM60 14h4v3h-4zM60 18h6v3h-6zM69 6h5v3h-5z" fill="#4a9a4a"/><path d="M65 10h10v3H65zM65 14h11v3H65z" fill="#d88a80"/></svg>
<div class="a" style="left:823px;top:634px;width:817px;height:17px;background:#a8d892;border:1px solid #88bc78;border-radius:3px"></div>
<div class="a" style="left:824px;top:635px;width:14px;height:15px;background:linear-gradient(#d4f0c6,#b0e09c);border-radius:3px;border-right:1px solid #88bc78"></div>
<svg style="left:824px;top:635px" width="14" height="15"><path d="M9 4v7L5 7.500z" fill="#111"/></svg>
<div class="a" style="left:1618px;top:635px;width:21px;height:15px;background:linear-gradient(#d4f0c6,#b0e09c);border-radius:3px"></div>
<svg style="left:1618px;top:635px" width="22" height="15"><path d="M1 3.500h7M1 6.500h7M1 9.500h7M1 12.500h7" stroke="#8fb080"/><path d="M14 4v7l4-3.500z" fill="#111"/></svg>
<svg style="left:1646px;top:630px" width="108" height="24" fill="none"><path d="M3 9h5v11H3z" fill="#c6748a" stroke="#555"/><path d="M11 5h6v12h-6z" fill="#58c558" stroke="#2a7a2a"/><path d="M3 18L12 10C10 6 13 3 17 4L15 6l1 2 2-2C19 10 15 12 13 11L6 20z" fill="#fff" stroke="#222"/><circle cx="33" cy="8" r="6" fill="#d0d4d0" stroke="#333" stroke-width="1.600"/><path d="M37 12l6 6" stroke="#111" stroke-width="3"/><path d="M44 3v9M41.500 5L44 2.500 46.500 5M41.500 10L44 12.500 46.500 10M28 19h10M30 17l-2 2 2 2M36 17l2 2-2 2" stroke="#2050d0" stroke-width="1.300"/><circle cx="63" cy="9" r="6.500" fill="#fff" stroke="#111" stroke-width="1.800"/><path d="M60 9h6" stroke="#2050d0" stroke-width="2"/><path d="M68 14l6 6" stroke="#111" stroke-width="3"/><circle cx="91" cy="9" r="6.500" fill="#fff" stroke="#111" stroke-width="1.800"/><path d="M88 9h6M91 6v6" stroke="#2050d0" stroke-width="2"/><path d="M96 14l6 6" stroke="#111" stroke-width="3"/></svg>

<!-- BOTTOM WINDOW -->
<div class="a" style="left:663px;top:659px;width:1094px;height:328px;background:#a9dc92"></div>
<div class="a" style="left:665px;top:660px;width:1092px;height:24px;background:linear-gradient(#c2f3ab,#a9dd93);border-bottom:1px solid #dff4d4"></div>
<svg style="left:664px;top:662px" width="22" height="22"><path d="M2.500 6.500h6v10h-6z" fill="#e8604e" stroke="#a02a1a"/><path d="M5.500 4v15" stroke="#a02a1a"/><path d="M10.500 4.500h6v11h-6z" fill="#7ee86a" stroke="#0a8a0a"/><path d="M13.500 2v16" stroke="#0a8a0a"/></svg>
<div class="t" style="left:684px;top:664px;font-size:10.8px">Backtesting e Trading Automatico - Creazione di un sistema di trading&nbsp; -</div>
<div class="inp" style="left:1031px;top:661px;width:166px;height:22px;border-color:#b6d6ac"></div>
<div class="t" style="left:1034px;top:664px;font-size:10.8px">Prova Medie MTF</div>
<svg style="left:1200px;top:662px" width="22" height="20"><path d="M2.500 1.500h9L15 5v12.500H2.500z" fill="#eef8e8" stroke="#8aaa88"/><path d="M4 6h6M4 9h5M4 12h6M4 15h6" stroke="#8aaa88"/><circle cx="14" cy="12" r="6" fill="#eef8e8" stroke="#8aaa88"/><text x="11.500" y="16" font-size="10" font-family="Liberation Sans" fill="#7a9a7a">?</text></svg>
<svg style="left:1712px;top:665px" width="44" height="16"><path d="M1 11.500h8" stroke="#8dbb80" stroke-width="2"/><path d="M15.500 3.500h7v8h-7z" fill="none" stroke="#8dbb80" stroke-width="1.500"/><path d="M29 3l8 9M37 3l-8 9" stroke="#8dbb80" stroke-width="1.800"/></svg>

<div class="a c" style="left:675px;top:697px;width:131px;height:19px;background:linear-gradient(#fff,#ecf2ea);border:1px solid #a8c4a0;border-bottom:0;border-radius:3px 3px 0 0;color:#a5a5a5;line-height:18px;font-size:10.8px">Creazione semplificata</div>
<div class="a c" style="left:806px;top:695px;width:174px;height:21px;background:linear-gradient(#2bc533,#1ca826);border-radius:3px 3px 0 0;color:#eafbe6;line-height:21px;font-size:10.8px">Creazione per programmazione</div>
<div class="a" style="left:674px;top:715px;width:740px;height:245px;background:#d0ebc6;border:1px solid #8fb787"></div>
<div class="a" style="left:680px;top:722px;width:19px;height:19px;background:#f1f7ee;border:1px solid #8aa886;border-radius:3px"></div>
<svg style="left:682px;top:724px" width="15" height="15"><use href="#wr" x="0" y="0"/></svg>
<div class="t b" style="left:704px;top:723px;font-size:11.3px">Ottimizzazione variabili:</div>
<div class="t" style="left:841px;top:723px;font-size:11px;color:#2a46c8;text-decoration:underline">Aggiungi</div>

<div class="a" style="left:680px;top:745px;width:728px;height:209px;background:#fff;border:1px solid #8fb787"></div>
<div class="a" style="left:681px;top:746px;width:726px;height:30px;background:#d3eccb;border-bottom:1px solid #a8c4a0"></div>
<svg style="left:660px;top:740px" width="450" height="40" fill="none">
<circle cx="30" cy="27" r="3" stroke="#333" stroke-width="1.200"/><circle cx="39" cy="27" r="3" stroke="#333" stroke-width="1.200"/><path d="M31 24L38 13M38 24L31 13" stroke="#888" stroke-width="1.600"/>
<path d="M54 13h9v14h-9z" fill="#e8ecea" stroke="#aab"/><path d="M58 17h6l4 4v9H58z" fill="#f2f4f2" stroke="#99a"/>
<path d="M81.500 15h13v12h-13z" fill="#a9682a" stroke="#7a4a1a"/><path d="M85 13h6v4h-6z" fill="#ccc" stroke="#777"/><path d="M88 18h5l1 1v8h-6z" fill="#fff" stroke="#aaa"/>
<path d="M109.500 13v16M179.500 13v16M249.500 13v16M319.500 13v16" stroke="#8fb080"/>
<path d="M132 19h-3c5 0 10 1 10 6 0 2-1 3-3 4 0-3-3-6-7-6v3l-5-5 5-5z" fill="#1e60d0"/>
<path d="M158 19h3c-5 0-10 1-10 6 0 2 1 3 3 4 0-3 3-6 7-6v3l5-5-5-5z" fill="#8fb7d8"/>
<circle cx="198" cy="19" r="6" stroke="#333" stroke-width="1.500"/><path d="M202 23l8 7" stroke="#222" stroke-width="2.200"/>
<path d="M228 11c6 0 10 3 10 8s-4 8-9 8l-3 4v-4c-4-1-7-4-7-8 0-5 4-8 9-8z" fill="#f4f6f4" stroke="#b4beb4" stroke-width="1.500"/><path d="M227 15l-2 8M232 15l-2 8" stroke="#888"/>
<path d="M272.500 14h9v2.500h-9zM302 11h3.500v4h4v3.500h-4v3.500H302v-3.500h-4V15h4z" fill="#fff" stroke="#333"/>
<text transform="translate(260 29) scale(1.250 1)" font-family="Liberation Serif,serif" font-size="17" fill="#222">A</text>
<text transform="translate(288 29) scale(1.250 1)" font-family="Liberation Serif,serif" font-size="17" fill="#222">A</text>
<path d="M341 12c4 0 6.500 3 6.500 6.500 0 3-2 4-3 6.500v2h-7v-2c-1-2.500-3-3.500-3-6.500 0-3.500 2.500-6.500 6.500-6.500z" fill="#f8ec90" stroke="#d8c860"/><path d="M337.500 27h7v3h-7z" fill="#d8d8b8" stroke="#a8a888"/>
<text x="361" y="27" font-family="Liberation Serif,serif" font-style="italic" font-weight="bold" font-size="17" fill="#222">f</text><text x="368" y="28" font-family="Liberation Serif,serif" font-weight="bold" font-size="9" fill="#222">x</text>
<circle cx="395" cy="21" r="8.500" fill="#2566c8" stroke="#b8d0ea" stroke-width="1.500"/><text x="391.500" y="25.500" font-family="Liberation Sans,sans-serif" font-weight="bold" font-size="12" fill="#fff">?</text>
<path d="M418.500 13.500h10v6h-10z" fill="#fff" stroke="#777"/><path d="M414 19h18v5h-18z" fill="#a8acae" stroke="#777"/><path d="M414 24h18v4h-18z" fill="#6a6e72"/>
</svg>

<div class="a" style="left:681px;top:777px;width:36px;height:176px;background:#d0ebc6;border-right:1px solid #a8c4a0"></div>
<div class="a" style="left:681px;top:777px;width:36px;height:35px;background:#f2cf8e;border-right:1px solid #a8c4a0"></div>
<div class="a" style="left:681px;top:812px;width:36px;height:34px;background:#cdb4ff;border-right:1px solid #a8c4a0"></div>
<div class="a" style="left:717px;top:812px;width:690px;height:17px;background:#e4e4e4"></div>
<div class="n" style="top:777px">1</div><div class="n" style="top:794px">2</div><div class="n" style="top:811px">3</div><div class="n" style="top:828px">4</div><div class="n" style="top:845px">5</div><div class="n" style="top:862px">6</div><div class="n" style="top:879px">7</div><div class="n" style="top:896px">8</div><div class="n" style="top:913px">9</div>
<div class="code" style="top:777px"><span class="k">TIMEFRAME</span><span class="p">(</span><span class="v">Daily</span><span class="p">,</span><span class="v">updateonclose</span><span class="p">)</span></div>
<div class="code" style="top:794px">MediaGiorno = <span class="o">average</span><span class="m">[50</span>,<span class="m">0]</span><span class="p">(</span><span class="v">close</span><span class="p">)</span></div>
<div class="code" style="top:811px"><span class="k">TIMEFRAME</span><span class="p">(</span><span class="s">1</span> <span class="v">hour</span><span class="p">,</span><span class="v">updateonclose</span><span class="p">)</span></div>
<div class="code" style="top:828px">MediaOraria = <span class="o">average</span><span class="m">[50</span>,<span class="m">0]</span><span class="p">(</span><span class="v">close</span><span class="p">)</span></div>
<div class="code" style="top:845px"><span class="k">TIMEFRAME</span><span class="p">(</span><span class="v">default</span><span class="p">)</span></div>
<div class="code" style="top:862px"><span class="k">buy at -close limit</span>          <span class="cm">//istruzione inutile, ma richiesta da ProBackTest</span></div>
<div class="code" style="top:879px"><span class="h">GraphOnPrice</span> MediaGiorno <span class="k">coloured</span>(<span class="m">255</span>,<span class="m">0</span>,<span class="m">0</span>,<span class="m">255</span>) <span class="k">AS</span> <span class="s">"MediaG"</span></div>
<div class="code" style="top:896px"><span class="h">GraphOnPrice</span> MediaOraria <span class="k">coloured</span>(<span class="m">0</span>,<span class="m">128</span>,<span class="m">0</span>,<span class="m">255</span>) <span class="k">AS</span> <span class="s">"MediaO"</span></div>

<!-- right panel -->
<div class="a" style="left:1425px;top:774px;width:322px;height:186px;background:#cde9c2;border:1px solid #8fb787;border-top:0;border-radius:0 0 4px 4px"></div>
<div class="a" style="left:1585px;top:696px;width:162px;height:78px;background:linear-gradient(#d4eecb,#a9d79a);border:1px solid #8fb787;border-radius:0 4px 0 0"></div>
<div class="a" style="left:1425px;top:696px;width:161px;height:90px;background:linear-gradient(#ecf8e6,#cde9c2);border:1px solid #8fb787;border-width:1px 1px 0 1px;border-radius:4px 4px 0 0"></div>
<div class="t c" style="left:1425px;width:161px;top:699px;font-size:10.8px">ProBacktest</div>
<div class="t c" style="left:1586px;width:161px;top:701px;font-size:10.8px">Autotrading ProOrder</div>
<svg style="left:1450px;top:718px" width="42" height="48" fill="none"><path d="M2.500 3.500h37v41h-37z" fill="#f2f6f6" stroke="#2a5aa8"/><path d="M2.500 3.500h37v5h-37z" fill="#2a5aa8"/><path d="M15 4v40M27 4v40" stroke="#2a5aa8"/><path d="M5 12h8M5 16h8M5 20h8M5 24h8M5 28h8M5 32h8M5 36h8M5 40h8M17 12h8M17 16h8M17 20h8M17 24h8M17 28h8M17 32h8M17 36h8M17 40h8M29 12h8M29 16h8M29 20h8M29 24h8M29 28h8M29 32h8M29 36h8M29 40h8" stroke="#8a9a9a"/></svg>
<svg style="left:1400px;top:640px" width="357" height="140" fill="none"><g transform="scale(.33333)">
<path d="M270 330L285 335 300 325 320 305 345 285 355 305 365 290 385 290 403 265 420 290 440 280 455 285 465 255V360H270z" fill="#d8e2d6"/>
<path d="M270 330L285 335 300 325 320 305 345 285 355 305 365 290 385 290 403 265 420 290 440 280 455 285 465 255" stroke="#1da71d" stroke-width="5"/>
<path d="M270 360H470M465 250V360M283 360v8M313 360v8M343 360v8M373 360v8M403 360v8M433 360v8M465 270h6M465 300h6M465 330h6" stroke="#8a9a8a" stroke-width="2"/>
<path d="M342 255h10v10h5l-10 10-10-10h5zM398 243h10v10h5l-10 10-10-10h5z" fill="#444"/>
<path d="M328 310l9 9h-5v9h-8v-9h-5zM386 300l9 9h-5v9h-8v-9h-5z" fill="#fff" stroke="#888"/>
<path d="M648 330L680 335 700 328 730 328 770 342 800 320 820 300 835 312 850 295 870 292 885 272 900 298 920 290 935 285 945 262V365H648z" fill="#d8e2d6"/>
<path d="M648 330L680 335 700 328 730 328 770 342 800 320 820 300 835 312 850 295 870 292 885 272 900 298 920 290 935 285 945 262" stroke="#1da71d" stroke-width="6"/>
<path d="M648 365H950M945 250V365M680 365v8M710 365v8M740 365v8M770 365v8M800 365v8M830 365v8M860 365v8M890 365v8M920 365v8" stroke="#8a9a8a" stroke-width="2"/>
<path d="M760 288H810" stroke="#555" stroke-width="2.500"/><path d="M810 290H945" stroke="#1c3aa0" stroke-width="3"/>
<circle cx="690" cy="282" r="12" stroke="#2a5aa8" stroke-width="8"/><circle cx="722" cy="265" r="8" stroke="#2a7aa8" stroke-width="6"/><circle cx="722" cy="300" r="8" stroke="#2a7aa8" stroke-width="6"/>
<path d="M675 262C655 265 645 285 660 300" stroke="#e05a4a" stroke-width="7"/><path d="M648 290l12 14 6-16z" fill="#e05a4a"/>
<path d="M740 305C755 300 757 285 755 268" stroke="#1da71d" stroke-width="7"/><path d="M745 272l10-14 10 14z" fill="#1da71d"/>
<path d="M825 262h8v8h5l-9 9-9-9h5zM882 250h8v8h5l-9 9-9-9h5z" fill="#e03a3a"/>
<path d="M811 316l9 9h-5v8h-8v-8h-5zM868 307l9 9h-5v8h-8v-8h-5z" fill="#1da71d"/>
</g></svg>

<div class="t b c" style="left:1450px;width:268px;top:783px;font-size:11px">CHF/JPY Mini - 1 Ora</div>
<div class="t" style="left:1502px;top:808px;font-size:10.8px">Capitale iniziale :</div>
<div class="inp" style="left:1586px;top:805px;width:70px;height:22px"></div>
<div class="t" style="left:1590px;top:808px;font-size:11.500px">10000</div>
<div class="t b" style="left:1661px;top:808px;font-size:11px">¥</div>
<div class="t b" style="left:1434px;top:831px;font-size:11.3px">Stima commissioni di intermediazione</div>
<div class="a" style="left:1437px;top:859px;width:12px;height:12px;background:#fff;border:1px solid #7e9a78"></div>
<div class="t" style="left:1453px;top:856px;font-size:10.8px">Commissione per ordine :</div>
<div class="a" style="left:1535px;top:884px;width:12px;height:12px;border:1px solid #9db596"></div>
<div class="t" style="left:1551px;top:881px;font-size:11px;color:#9aab96">Min:</div>
<div class="a" style="left:1535px;top:909px;width:12px;height:12px;border:1px solid #9db596"></div>
<div class="t" style="left:1551px;top:906px;font-size:11px;color:#9aab96">Max:</div>
<div class="a" style="left:1437px;top:934px;width:12px;height:12px;background:#fff;border:1px solid #7e9a78"></div>
<div class="t" style="left:1453px;top:931px;font-size:11px">Spread:</div>
<div class="dis" style="left:1583px;top:853px;width:54px">0</div>
<div class="dis" style="left:1583px;top:878px;width:54px">0</div>
<div class="dis" style="left:1583px;top:903px;width:54px">0</div>
<div class="dis" style="left:1583px;top:928px;width:54px;text-align:right;padding-right:18px">2</div>
<svg style="left:1622px;top:932px" width="12" height="15"><path d="M5 2l3 3H2zM5 13l3-3H2z" fill="#9aab96"/></svg>
<div class="t" style="left:1641px;top:931px;font-size:11px;color:#9aab96">pip</div>
<div class="dis" style="left:1642px;top:853px;width:88px;border-right:0;border-radius:4px 0 0 4px;font-size:11px">¥ / ordine</div>
<div class="dis" style="left:1642px;top:878px;width:88px;border-right:0;border-radius:4px 0 0 4px;font-size:11px">¥ / ordine</div>
<div class="dis" style="left:1642px;top:903px;width:88px;border-right:0;border-radius:4px 0 0 4px;font-size:11px">¥ / ordine</div>
<svg style="left:1717px;top:856px" width="12" height="70"><path d="M.5 .5h11v15h-11zM.5 25.500h11v15h-11zM.5 50.500h11v15h-11z" fill="#cde9c2" stroke="#9db596"/><path d="M4 6h6l-3 4zM4 31h6l-3 4zM4 56h6l-3 4z" fill="none" stroke="#9aab96"/></svg>
<div class="a" style="left:1728px;top:775px;width:16px;height:183px;background:#9fd08c;border:1px solid #86b87a;border-radius:3px"></div>
<div class="a" style="left:1729px;top:776px;width:14px;height:15px;background:linear-gradient(#fafdf8,#d4ecca);border-radius:3px"></div>
<div class="a" style="left:1729px;top:942px;width:14px;height:15px;background:linear-gradient(#fafdf8,#d4ecca);border-radius:3px"></div>
<div class="a" style="left:1729px;top:793px;width:14px;height:64px;background:linear-gradient(90deg,#c8ecb6,#b4e0a0);border:1px solid #9ccb8a;border-radius:3px"></div>
<svg style="left:1729px;top:776px" width="14" height="182"><path d="M4 10l3-3 3 3zM4 171l3 3 3-3z" fill="#111" stroke="#111"/><path d="M4 43.500h6M4 46.500h6M4 49.500h6" stroke="#90b880"/></svg>

<!-- bottom status -->
<div class="a" style="left:666px;top:967px;width:1088px;height:19px;background:linear-gradient(#c4efae,#b2e59a);border-top:1px solid #e0f6d6"></div>
<svg style="left:670px;top:969px" width="17" height="16"><path d="M0 0h16v15H0z" fill="#333"/><path d="M1 1h2v2H1zM5 1h2v2H5zM9 1h2v2H9zM13 1h2v2h-2zM1 12h2v2H1zM5 12h2v2H5zM9 12h2v2H9zM13 12h2v2h-2z" fill="#ddd"/><path d="M6 5l5 2.500L6 10z" fill="#fff"/></svg>
<div class="t" style="left:690px;top:969px;font-size:11px;color:#2a46c8;text-decoration:underline">Video formazione</div>
</body></html>
